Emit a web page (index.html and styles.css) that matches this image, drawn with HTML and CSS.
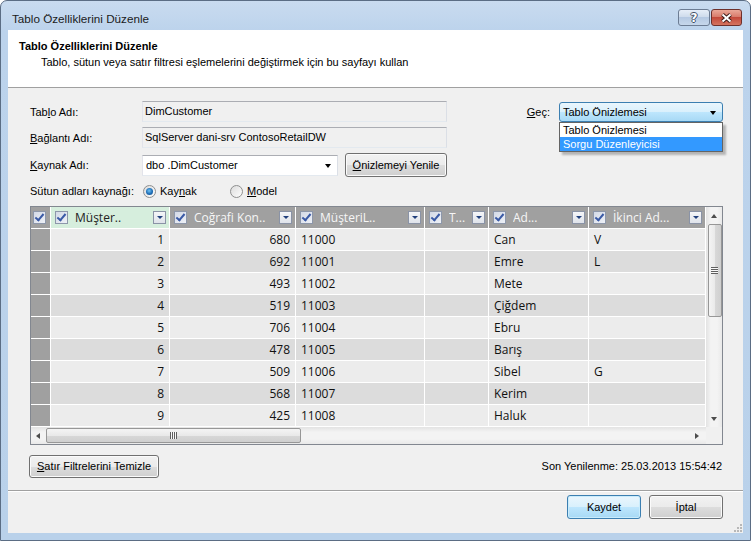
FILE: index.html
```html
<!DOCTYPE html>
<html lang="tr">
<head>
<meta charset="UTF-8">
<meta name="viewport" content="width=device-width, initial-scale=1.0">
<title>Tablo Özelliklerini Düzenle</title>
<link rel="stylesheet" href="styles.css">
</head>
<body>
<div class="window">
    <div class="titlebar">
        <span class="title">Tablo Özelliklerini Düzenle</span>
        <div class="caption-buttons">
            <div class="cap-btn help">?</div>
            <div class="cap-btn close">
                <svg width="13" height="10" viewBox="0 0 13 10">
                    <path d="M2.5 1.5 L10.5 8.5 M10.5 1.5 L2.5 8.5" stroke="#3c1c1a" stroke-width="4"/>
                    <path d="M2.5 1.5 L10.5 8.5 M10.5 1.5 L2.5 8.5" stroke="#fff" stroke-width="2"/>
                </svg>
            </div>
        </div>
    </div>

    <div class="client">
        <div class="header">
            <div class="header-title">Tablo Özelliklerini Düzenle</div>
            <div class="header-sub">Tablo, sütun veya satır filtresi eşlemelerini değiştirmek için bu sayfayı kullan</div>
        </div>

        <div class="content">
            <div class="row r1">
                <span class="lbl">Tab<u>l</u>o Adı:</span>
                <div class="textbox">DimCustomer</div>
                <div class="switch">
                    <span class="lbl-short"><u>G</u>eç:</span>
                    <div class="combo hot">
                        Tablo Önizlemesi
                        <span class="arrow"></span>
                        <div class="droplist">
                            <div class="item">Tablo Önizlemesi</div>
                            <div class="item active">Sorgu Düzenleyicisi</div>
                        </div>
                    </div>
                </div>
            </div>

            <div class="row r2">
                <span class="lbl"><u>B</u>ağlantı Adı:</span>
                <div class="textbox">SqlServer dani-srv ContosoRetailDW</div>
            </div>

            <div class="row r3">
                <span class="lbl"><u>K</u>aynak Adı:</span>
                <div class="combo source">dbo .DimCustomer<span class="arrow"></span></div>
                <div class="btn refresh"><span><u>Ö</u>nizlemeyi Yenile</span></div>
            </div>

            <div class="row r4">
                <span class="lbl">Sütun adları kaynağı:</span>
                <div class="opt"><span class="radio on"></span><span>Kay<u>n</u>ak</span></div>
                <div class="opt"><span class="radio"></span><span><u>M</u>odel</span></div>
            </div>

            <div class="grid">
                <div class="grid-top">
                    <div class="cells">
                        <div class="gh">
                            <div class="c corner"><span class="chk"></span></div>
                            <div class="c sel"><span class="chk"></span><span class="ht">Müşter..</span><span class="dd"></span></div>
                            <div class="c"><span class="chk"></span><span class="ht">Coğrafi Kon..</span><span class="dd"></span></div>
                            <div class="c"><span class="chk"></span><span class="ht">MüşteriL..</span><span class="dd"></span></div>
                            <div class="c"><span class="chk"></span><span class="ht">T...</span><span class="dd"></span></div>
                            <div class="c"><span class="chk"></span><span class="ht">Ad...</span><span class="dd"></span></div>
                            <div class="c"><span class="chk"></span><span class="ht">İkinci Ad...</span><span class="dd"></span></div>
                        </div>
                        <div class="rows">
                            <div class="gr"><div class="c rs"></div><div class="c num">1</div><div class="c num">680</div><div class="c">11000</div><div class="c"></div><div class="c">Can</div><div class="c">V</div></div>
                            <div class="gr"><div class="c rs"></div><div class="c num">2</div><div class="c num">692</div><div class="c">11001</div><div class="c"></div><div class="c">Emre</div><div class="c">L</div></div>
                            <div class="gr"><div class="c rs"></div><div class="c num">3</div><div class="c num">493</div><div class="c">11002</div><div class="c"></div><div class="c">Mete</div><div class="c"></div></div>
                            <div class="gr"><div class="c rs"></div><div class="c num">4</div><div class="c num">519</div><div class="c">11003</div><div class="c"></div><div class="c">Çiğdem</div><div class="c"></div></div>
                            <div class="gr"><div class="c rs"></div><div class="c num">5</div><div class="c num">706</div><div class="c">11004</div><div class="c"></div><div class="c">Ebru</div><div class="c"></div></div>
                            <div class="gr"><div class="c rs"></div><div class="c num">6</div><div class="c num">478</div><div class="c">11005</div><div class="c"></div><div class="c">Barış</div><div class="c"></div></div>
                            <div class="gr"><div class="c rs"></div><div class="c num">7</div><div class="c num">509</div><div class="c">11006</div><div class="c"></div><div class="c">Sibel</div><div class="c">G</div></div>
                            <div class="gr"><div class="c rs"></div><div class="c num">8</div><div class="c num">568</div><div class="c">11007</div><div class="c"></div><div class="c">Kerim</div><div class="c"></div></div>
                            <div class="gr"><div class="c rs"></div><div class="c num">9</div><div class="c num">425</div><div class="c">11008</div><div class="c"></div><div class="c">Haluk</div><div class="c"></div></div>
                        </div>
                    </div>
                    <div class="vscroll">
                        <span class="sarrow up"></span>
                        <div class="vthumb"><span class="grip-v"></span></div>
                        <span class="sarrow down"></span>
                    </div>
                </div>
                <div class="grid-bottom">
                    <div class="hscroll">
                        <span class="sarrow left"></span>
                        <div class="hthumb"><span class="grip-h"></span></div>
                        <span class="sarrow right"></span>
                    </div>
                    <div class="scorner"></div>
                </div>
            </div>

            <div class="row r5">
                <div class="btn clear"><span><u>S</u>atır Filtrelerini Temizle</span></div>
                <span class="refreshed">Son Yenilenme: 25.03.2013 15:54:42</span>
            </div>
        </div>

        <div class="footer">
            <div class="btn default">Kaydet</div>
            <div class="btn">İptal</div>
        </div>

        <svg class="sizegrip" width="10" height="10" viewBox="0 0 10 10">
            <g fill="#b8b8b8">
                <rect x="8" y="2" width="2" height="2"/>
                <rect x="5" y="5" width="2" height="2"/><rect x="8" y="5" width="2" height="2"/>
                <rect x="2" y="8" width="2" height="2"/><rect x="5" y="8" width="2" height="2"/><rect x="8" y="8" width="2" height="2"/>
            </g>
        </svg>
    </div>
</div>
</body>
</html>
```

FILE: styles.css
```css
body {
    margin: 0;
    background: #fff;
    font-family: "Liberation Sans", Arial, sans-serif;
    font-size: 11px;
    color: #000;
}
.window {
    width: 751px;
    height: 541px;
    box-sizing: border-box;
    border: 1px solid #5b6d84;
    border-radius: 7px 7px 0 0;
    background: linear-gradient(to bottom, #c9dbef 0, #bcd3ec 30px, #b9d1ea 100%);
    padding: 0 7px 7px 7px;
    display: flex;
    flex-direction: column;
    overflow: hidden;
}

/* title bar */
.titlebar {
    height: 29px;
    display: flex;
    justify-content: space-between;
    align-items: flex-start;
    flex: none;
}
.title {
    margin: 11px 0 0 4px;
    font-size: 11.7px;
    line-height: 14px;
    color: #1b1b1b;
}
.caption-buttons {
    display: flex;
    gap: 1px;
    margin: 8px 1px 0 0;
}
.cap-btn {
    width: 32px;
    height: 17px;
    box-sizing: border-box;
    border: 1px solid #6c7c93;
    border-radius: 3px;
    display: flex;
    align-items: center;
    justify-content: center;
}
.help {
    background: linear-gradient(#e6eef8 0%, #cfdcec 45%, #b5c9e2 50%, #c6d7eb 100%);
    font-family: "DejaVu Sans", sans-serif;
    font-weight: bold;
    font-size: 12px;
    color: #fff;
    text-shadow: 1px 0 #435066, -1px 0 #435066, 0 1px #435066, 0 -1px #435066;
}
.close {
    width: 31px;
    border-color: #6e302b;
    background: linear-gradient(#eaa898 0%, #d97c6c 45%, #c34a3b 50%, #d4735f 100%);
}

/* client area */
.client {
    flex: 1;
    display: flex;
    flex-direction: column;
    background: #f0f0f0;
    position: relative;
}
.header {
    flex: none;
    background: #fff;
    border-bottom: 1px solid #a0a0a0;
    padding: 10px 0 0 11px;
    height: 47px;
}
.header-title {
    font-weight: bold;
    line-height: 13px;
}
.header-sub {
    margin: 3px 0 0 22px;
    line-height: 13px;
}

.content {
    flex: 1;
    padding: 13px 20px 0 22px;
    display: flex;
    flex-direction: column;
}
.row {
    display: flex;
    align-items: center;
    height: 21px;
}
.r2, .r3 { margin-top: 5px; }
.r3 { height: 24px; }
.r4 { margin-top: 5px; height: 18px; }
.r5 { margin-top: 9px; height: 24px; justify-content: space-between; }

.lbl {
    width: 112px;
    flex: none;
}
.lbl-short {
    margin-right: 9px;
}
.textbox {
    width: 305px;
    height: 21px;
    box-sizing: border-box;
    border: 1px solid;
    border-color: #abadb3 #dbdfe6 #e3e9ef #e2e3ea;
    background: #f0f0f0;
    padding-left: 2px;
    line-height: 19px;
    white-space: nowrap;
}
.switch {
    margin-left: auto;
    display: flex;
    align-items: center;
}
.combo {
    position: relative;
    height: 21px;
    box-sizing: border-box;
    border: 1px solid;
    border-color: #abadb3 #dbdfe6 #e3e9ef #e2e3ea;
    background: #fff;
    padding-left: 3px;
    line-height: 19px;
}
.combo .arrow {
    position: absolute;
    right: 6px;
    top: 8px;
    border-left: 3.5px solid transparent;
    border-right: 3.5px solid transparent;
    border-top: 4px solid #000;
}
.combo.source {
    width: 196px;
}
.combo.hot {
    width: 164px;
    height: 20px;
    line-height: 18px;
    border-color: #3c7fb1;
    border-radius: 3px;
    background: linear-gradient(#eaf6fd 0%, #d9f0fc 50%, #bee6fd 50%, #a7d9f5 100%);
}
.droplist {
    position: absolute;
    left: -1px;
    top: 19px;
    width: 164px;
    box-sizing: border-box;
    border: 1px solid #646464;
    background: #fff;
    box-shadow: 3px 3px 2px rgba(0, 0, 0, 0.25);
    z-index: 2;
}
.droplist .item {
    height: 14px;
    line-height: 14px;
    padding-left: 3px;
}
.droplist .item.active {
    background: #3399ff;
    color: #fff;
}

.btn {
    height: 23px;
    box-sizing: border-box;
    border: 1px solid #707070;
    border-radius: 3px;
    background: linear-gradient(#f2f2f2 0%, #ebebeb 50%, #dddddd 50%, #cfcfcf 100%);
    box-shadow: inset 0 0 0 1px #fbfbfb;
    display: flex;
    align-items: center;
    justify-content: center;
    white-space: nowrap;
}
.btn.refresh {
    width: 102px;
    height: 24px;
    margin-left: 7px;
}
.btn.clear {
    width: 130px;
    margin-left: -1px;
}
.btn.default {
    border-color: #3c7fb1;
    background: linear-gradient(#eaf6fd 0%, #d9f0fc 50%, #bee6fd 50%, #a7d9f5 100%);
    box-shadow: inset 0 0 0 1px #c9ecfc;
}

.opt {
    display: flex;
    align-items: center;
    gap: 4px;
    width: 87px;
}
.r4 .lbl { width: 113px; }
.radio {
    width: 13px;
    height: 13px;
    box-sizing: border-box;
    border-radius: 50%;
    border: 1px solid #8e8f8f;
    background: linear-gradient(135deg, #dcdcdc, #fdfdfd);
    display: flex;
    align-items: center;
    justify-content: center;
}
.radio.on::after {
    content: "";
    width: 7px;
    height: 7px;
    border-radius: 50%;
    background: radial-gradient(circle at 45% 40%, #6fc4f5 0, #1e6cb5 55%, #144f8c 100%);
}

/* data grid */
.grid {
    margin-top: 6px;
    width: 693px;
    height: 239px;
    box-sizing: border-box;
    border: 1px solid #828790;
    background: #f0f0f0;
    display: flex;
    flex-direction: column;
    flex: none;
}
.grid-top {
    display: flex;
    height: 220px;
}
.cells {
    width: 675px;
    font-family: "Open Sans", "Noto Sans", sans-serif;
    font-size: 12px;
}
.gh, .gr {
    display: grid;
    grid-template-columns: 20px 119px 126px 129px 64px 100px 117px;
    height: 22px;
}
.c {
    box-sizing: border-box;
    border-right: 1px solid #fff;
    border-bottom: 1px solid #fff;
    white-space: nowrap;
    overflow: hidden;
}
.gh .c {
    background: #a0a0a0;
    color: #f6f6f6;
    display: flex;
    align-items: center;
    padding: 0 3px 0 4px;
}
.gh .c.sel {
    background: #d6eedd;
    color: #222;
}
.gh .c.corner {
    padding-left: 2px;
}
.ht {
    flex: 1;
    margin-left: 7px;
    overflow: hidden;
}
.chk {
    width: 13px;
    height: 13px;
    box-sizing: border-box;
    border: 1px solid #8d97aa;
    background: linear-gradient(135deg, #d3d9e6, #eef1f7);
    position: relative;
    flex: none;
}
.chk::after {
    content: "";
    position: absolute;
    left: 3px;
    top: 0px;
    width: 3px;
    height: 7px;
    border-right: 2px solid #3a5aa6;
    border-bottom: 2px solid #3a5aa6;
    transform: rotate(40deg);
}
.dd {
    width: 13px;
    height: 13px;
    box-sizing: border-box;
    border: 1px solid #8a93a6;
    background: linear-gradient(#f4f5f8, #dfe3ea);
    position: relative;
    flex: none;
}
.dd::after {
    content: "";
    position: absolute;
    left: 3px;
    top: 4px;
    border-left: 3px solid transparent;
    border-right: 3px solid transparent;
    border-top: 3px solid #203f7c;
}
.gr .c {
    background: #ececec;
    line-height: 21px;
    padding: 0 5px;
    color: #111;
}
.rows .gr:nth-child(even) .c {
    background: #dcdcdc;
}
.gr .c.rs,
.rows .gr:nth-child(even) .c.rs {
    background: #a0a0a0;
}
.gr .c.num {
    text-align: right;
}

/* scrollbars */
.vscroll {
    width: 16px;
    background: linear-gradient(to right, #e3e3e3, #f3f3f3 30%, #f3f3f3 70%, #e9e9e9);
    display: flex;
    flex-direction: column;
    align-items: center;
}
.vthumb {
    width: 14px;
    height: 93px;
    margin-left: 1px;
    box-sizing: border-box;
    border: 1px solid #979797;
    border-radius: 2px;
    background: linear-gradient(to right, #f4f4f4, #e9e9e9 50%, #d8d8d8 50%, #cfcfcf);
    display: flex;
    align-items: center;
    justify-content: center;
}
.grip-v {
    width: 7px;
    height: 7px;
    background: repeating-linear-gradient(to bottom, #5f5f5f 0, #5f5f5f 1px, #f8f8f8 1px, #f8f8f8 2px);
}
.grid-bottom {
    display: flex;
    height: 17px;
}
.hscroll {
    width: 675px;
    background: linear-gradient(to bottom, #e3e3e3, #f3f3f3 30%, #f3f3f3 70%, #e9e9e9);
    display: flex;
    align-items: center;
}
.hthumb {
    width: 255px;
    height: 15px;
    box-sizing: border-box;
    border: 1px solid #979797;
    border-radius: 2px;
    background: linear-gradient(to bottom, #f4f4f4, #e9e9e9 50%, #d8d8d8 50%, #cfcfcf);
    display: flex;
    align-items: center;
    justify-content: center;
}
.grip-h {
    width: 7px;
    height: 7px;
    background: repeating-linear-gradient(to right, #5f5f5f 0, #5f5f5f 1px, #f8f8f8 1px, #f8f8f8 2px);
}
.scorner {
    width: 16px;
    background: #f0f0f0;
}
.sarrow {
    width: 0;
    height: 0;
    flex: none;
}
.sarrow.up {
    margin: 7px 0 6px;
    border-left: 3.5px solid transparent;
    border-right: 3.5px solid transparent;
    border-bottom: 4px solid #4d4d4d;
}
.sarrow.down {
    margin: auto 0 6px;
    border-left: 3.5px solid transparent;
    border-right: 3.5px solid transparent;
    border-top: 4px solid #4d4d4d;
}
.sarrow.left {
    margin: 0 6px 0 5px;
    border-top: 3.5px solid transparent;
    border-bottom: 3.5px solid transparent;
    border-right: 4px solid #4d4d4d;
}
.sarrow.right {
    margin: 0 7px 0 auto;
    border-top: 3.5px solid transparent;
    border-bottom: 3.5px solid transparent;
    border-left: 4px solid #4d4d4d;
}

.refreshed {
    margin-right: 1px;
}

/* footer */
.footer {
    flex: none;
    height: 38px;
    border-top: 1px solid #a0a0a0;
    box-shadow: inset 0 1px #fff;
    padding: 4px 20px 0 0;
    display: flex;
    justify-content: flex-end;
    align-items: flex-start;
    gap: 8px;
}
.footer .btn {
    width: 74px;
    height: 24px;
}
.sizegrip {
    position: absolute;
    right: 1px;
    bottom: 1px;
}
```
